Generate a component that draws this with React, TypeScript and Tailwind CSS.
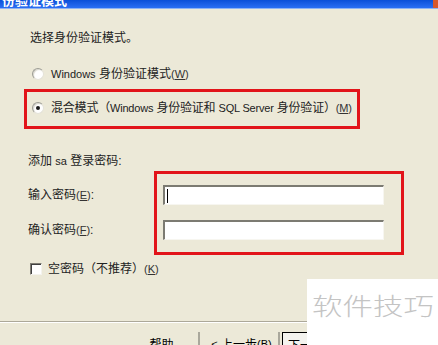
import { ReactNode } from "react";

const cjk = "font-['Tahoma','Liberation_Sans','Noto_Sans_CJK_SC',sans-serif]";

function Radio({ checked }: { checked?: boolean }) {
  return (
    <span className="flex h-[12px] w-[12px] shrink-0 items-center justify-center rounded-full border border-t-[#9c9c94] border-l-[#9c9c94] border-b-[#e4e2d8] border-r-[#e4e2d8] bg-white shadow-[inset_1px_1px_1px_#d8d6cc]">
      {checked ? <span className="h-[4px] w-[4px] rounded-full bg-[#1a1a1a]" /> : null}
    </span>
  );
}

function Checkbox() {
  return (
    <span className="block h-[12px] w-[12px] shrink-0 border border-t-[#7f7d74] border-l-[#7f7d74] border-b-[#f4f3ee] border-r-[#f4f3ee] bg-white shadow-[inset_1px_1px_0_#404040]" />
  );
}

function Key({ k }: { k: string }) {
  return (
    <span className="text-[11px] text-[#333]">
      (<span className="underline">{k}</span>)
    </span>
  );
}

function Field({ caret }: { caret?: boolean }) {
  return (
    <div className="flex h-[20px] w-[221px] items-center border-t-2 border-l-2 border-b border-r border-t-[#7c7b72] border-l-[#7c7b72] border-b-[#f7f6f0] border-r-[#f7f6f0] bg-white pl-[2px]">
      {caret ? <span className="block h-[14px] w-px bg-black" /> : null}
    </div>
  );
}

function Btn({ children, strong }: { children: ReactNode; strong?: boolean }) {
  return (
    <div
      className={
        "flex h-[23px] w-[75px] items-start justify-center whitespace-nowrap pt-[4px] text-[12px] text-black " +
        (strong
          ? "border border-black bg-[#f4f3ee]"
          : "border-r-2 border-r-[#aaa89c] bg-[#ece9d8]")
      }
    >
      {children}
    </div>
  );
}

export default function App() {
  return (
    <div className={"relative h-[345px] w-[438px] overflow-hidden bg-[#ECE9D8] text-[12px] text-[#222] " + cjk}>
      {/* title bar (mostly scrolled off) */}
      <div className="flex h-[9px] items-end justify-between overflow-hidden bg-gradient-to-b from-[#0a4fd8] to-[#2a6ff4] border-b border-b-[#8fb3f3]">
        <span className="-mb-[3px] pl-[2px] text-[13px] font-bold leading-[20px] text-white">份验证模式</span>
        <span className="h-[9px] w-[5px] bg-[#d9582c]" />
      </div>

      <div className="whitespace-nowrap pl-[30px] pt-[22px]">
        <div className="leading-[14px]">选择身份验证模式。</div>

        <div className="mt-[22px] flex items-center gap-[7px] pl-[2px] leading-[14px]">
          <Radio />
          <span>
            <span className="text-[11px]">Windows</span> 身份验证模式<Key k="W" />
          </span>
        </div>

        <div className="-ml-[6px] mt-[8px] h-[40px] w-[336px] border-[3px] border-[#e2141a] pl-[5px] pt-[9px]">
          <div className="flex items-center gap-[7px] leading-[14px]">
            <Radio checked />
            <span className="tracking-[-0.2px]">
              混合模式（<span className="text-[11px]">Windows</span> 身份验证和 <span className="text-[11px]">SQL Server</span> 身份验证）<Key k="M" />
            </span>
          </div>
        </div>

        <div className="-ml-[2px] mt-[25px] leading-[14px]">
          添加 <span className="text-[11px]">sa</span> 登录密码:
        </div>

        <div className="-ml-[2px] mt-[3px] flex">
          <div className="flex w-[126px] flex-col pt-[17px]">
            <div className="leading-[14px]">
              输入密码<Key k="E" />:
            </div>
            <div className="mt-[21px] leading-[14px]">
              确认密码<Key k="F" />:
            </div>
          </div>
          <div className="flex h-[84px] w-[250px] flex-col gap-[15px] border-[3px] border-[#e2141a] pl-[6px] pt-[11px]">
            <Field caret />
            <Field />
          </div>
        </div>

        <div className="mt-[7px] flex items-center gap-[6px] leading-[14px]">
          <Checkbox />
          <span>
            空密码（不推荐）<Key k="K" />
          </span>
        </div>
      </div>

      <div className="mt-[45px] h-[2px] border-t border-t-[#aca899] border-b border-b-white" />

      <div className="mt-[9px] flex pl-[125px]">
        <Btn>帮助</Btn>
        <div className="ml-[5px] flex">
          <Btn>
            <span className="text-[11px]">&lt;</span>&nbsp;上一步<span className="text-[11px]">(B)</span>
          </Btn>
          <div className="ml-[2px]">
            <Btn strong>下一步(N) &gt;</Btn>
          </div>
        </div>
      </div>

      {/* watermark */}
      <div className="absolute left-[307px] top-[279px] flex h-[66px] w-[131px] items-start bg-white pl-[5px] pt-[13px]">
        <span className="origin-left scale-x-[1.27] text-[24px] leading-[26px] text-[#c4c4c4] font-['Noto_Sans_CJK_SC',sans-serif] font-light">
          软件技巧
        </span>
      </div>
    </div>
  );
}
